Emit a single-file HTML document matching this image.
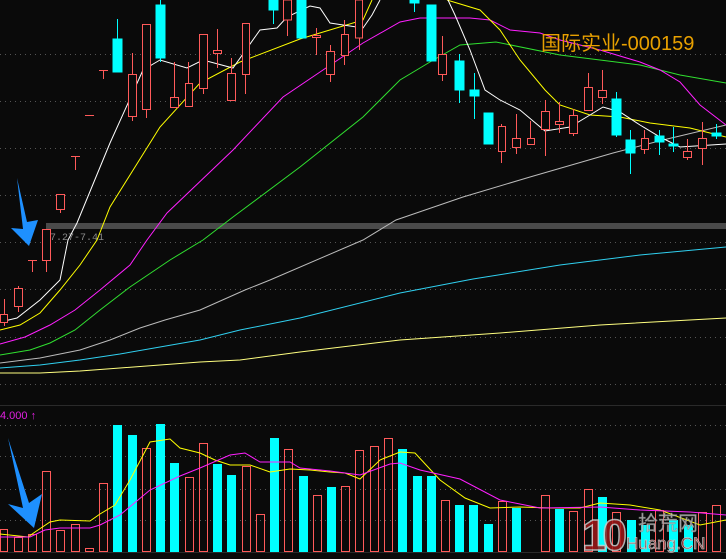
<!DOCTYPE html>
<html><head><meta charset="utf-8"><style>
html,body{margin:0;padding:0;background:#0a0a0a;width:726px;height:559px;overflow:hidden}
svg{display:block}
</style></head><body>
<svg width="726" height="559" viewBox="0 0 726 559" xmlns="http://www.w3.org/2000/svg">
<rect width="726" height="559" fill="#0a0a0a"/>
<g stroke="#555" stroke-dasharray="1,4" stroke-width="1">
<line x1="0" y1="54.5" x2="726" y2="54.5"/><line x1="0" y1="101.5" x2="726" y2="101.5"/>
<line x1="0" y1="148.5" x2="726" y2="148.5"/><line x1="0" y1="195.5" x2="726" y2="195.5"/>
<line x1="0" y1="242.5" x2="726" y2="242.5"/><line x1="0" y1="289.5" x2="726" y2="289.5"/>
<line x1="0" y1="337.5" x2="726" y2="337.5"/><line x1="0" y1="384.5" x2="726" y2="384.5"/>
<line x1="0" y1="425.5" x2="726" y2="425.5"/><line x1="0" y1="456.5" x2="726" y2="456.5"/>
<line x1="0" y1="489.5" x2="726" y2="489.5"/><line x1="0" y1="520.5" x2="726" y2="520.5"/>
</g>
<rect x="46" y="223" width="680" height="6" fill="#4a4a4a"/>
<text x="50" y="240" font-family="Liberation Mono,monospace" font-size="10" fill="#888">7.27-7.41</text>
<line x1="0" y1="405.5" x2="726" y2="405.5" stroke="#2a2a2a"/>
<line x1="0" y1="552.5" x2="726" y2="552.5" stroke="#2a2a2a"/>
<text x="0" y="419" font-family="Liberation Sans,sans-serif" font-size="11" fill="#e020e0">4.000 ↑</text>

<g fill="none" stroke-width="1">
<polyline stroke="#ffff80" points="0,373 40,373 80,371 120,368 160,365 200,362 240,360 300,352 400,340 500,333 600,325 726,318"/>
<polyline stroke="#30d0f0" points="0,368 40,365 80,360 120,354 160,347 200,340 240,330 300,318 400,293 473,279 560,265 640,255 726,247"/>
<polyline stroke="#bbb" points="0,363 40,358 80,350 110,340 140,328 165,320 200,310 245,290 270,280 363,240 396,220 463,197 530,177 613,153 663,140 726,125"/>
<polyline stroke="#30e030" points="0,355 30,350 50,343 75,330 100,310 130,287 170,260 203,240 233,217 300,167 363,117 400,80 430,62 460,45 496,42 560,55 600,60 640,65 680,75 726,83"/>
<polyline stroke="#ff20ff" points="0,344 25,337 50,325 75,310 100,290 130,265 147,240 167,213 233,150 283,97 363,43 400,22 420,18 470,18 490,20 510,30 540,33 560,40 600,50 640,62 660,70 680,82 700,105 726,125"/>
<polyline stroke="#ffff00" points="0,330 20,325 40,313 60,290 80,265 97,240 110,207 160,127 200,83 240,62 300,39 363,20 372,0"/>
<polyline stroke="#ffff00" points="447,0 480,10 500,30 520,60 545,90 560,105 590,115 620,117 650,123 690,128 726,137"/>
<polyline stroke="#fff" points="0,322 17,318 40,300 60,280 68,240 77,223 110,143 143,70 160,60 187,68 203,60 233,68 260,30 277,28 287,17 310,6 320,8 330,23 363,28 372,15 380,0"/>
<polyline stroke="#fff" points="448,0 455,15 470,50 485,90 500,100 520,110 545,131 570,127 590,115 603,107 620,112 640,125 660,137 680,147 726,144"/>
</g>

<g stroke="#ff5a5a" fill="#0a0a0a" stroke-width="1">
<line x1="4.5" y1="299" x2="4.5" y2="326"/><rect x="0.5" y="314.5" width="7" height="8"/>
<line x1="18.5" y1="286" x2="18.5" y2="312"/><rect x="14.5" y="288.5" width="8" height="18"/>
<line x1="28" y1="260.5" x2="37" y2="260.5"/><line x1="32.5" y1="260" x2="32.5" y2="272"/>
<line x1="46.5" y1="229" x2="46.5" y2="272"/><rect x="42.5" y="229.5" width="8" height="31"/>
<line x1="60.5" y1="194" x2="60.5" y2="213"/><rect x="56.5" y="194.5" width="8" height="15"/>
<line x1="71" y1="156.5" x2="80" y2="156.5"/><line x1="75.5" y1="156" x2="75.5" y2="170"/>
<line x1="85" y1="115.5" x2="94" y2="115.5"/>
<line x1="99" y1="70.5" x2="108" y2="70.5"/><line x1="103.5" y1="70" x2="103.5" y2="79"/>
<line x1="132.5" y1="53" x2="132.5" y2="121"/><rect x="128.5" y="74.5" width="8" height="42"/>
<line x1="146.5" y1="24" x2="146.5" y2="118"/><rect x="142.5" y="24.5" width="8" height="85"/>
<line x1="174.5" y1="62" x2="174.5" y2="107"/><rect x="170.5" y="97.5" width="8" height="10"/>
<line x1="188.5" y1="62" x2="188.5" y2="106"/><rect x="185.5" y="83.5" width="7" height="23"/>
<line x1="203.5" y1="34" x2="203.5" y2="94"/><rect x="199.5" y="34.5" width="8" height="54"/>
<line x1="217.5" y1="29" x2="217.5" y2="68"/><rect x="213.5" y="50.5" width="8" height="3"/>
<line x1="231.5" y1="58" x2="231.5" y2="101"/><rect x="227.5" y="73.5" width="8" height="27"/>
<line x1="245.5" y1="23" x2="245.5" y2="94"/><rect x="242.5" y="23.5" width="7" height="51"/>
<line x1="287.5" y1="0" x2="287.5" y2="36"/><rect x="283.5" y="0" width="8" height="20"/>
<line x1="316.5" y1="28" x2="316.5" y2="55"/><rect x="312.5" y="35.5" width="8" height="2"/>
<line x1="330.5" y1="45" x2="330.5" y2="82"/><rect x="326.5" y="51.5" width="8" height="23"/>
<line x1="344.5" y1="20" x2="344.5" y2="65"/><rect x="341.5" y="34.5" width="7" height="21"/>
<line x1="359.5" y1="0" x2="359.5" y2="50"/><rect x="355.5" y="0" width="7" height="38"/>
<line x1="442.5" y1="36" x2="442.5" y2="81"/><rect x="438.5" y="54.5" width="8" height="20"/>
<line x1="501.5" y1="124" x2="501.5" y2="163"/><rect x="498.5" y="126.5" width="7" height="25"/>
<line x1="516.5" y1="114" x2="516.5" y2="154"/><rect x="512.5" y="138.5" width="8" height="9"/>
<line x1="530.5" y1="121" x2="530.5" y2="145"/><rect x="527.5" y="138.5" width="7" height="6"/>
<line x1="545.5" y1="100" x2="545.5" y2="156"/><rect x="541.5" y="111.5" width="8" height="18"/>
<line x1="559.5" y1="102" x2="559.5" y2="133"/><rect x="555.5" y="121.5" width="8" height="3"/>
<line x1="573.5" y1="109" x2="573.5" y2="136"/><rect x="569.5" y="115.5" width="8" height="18"/>
<line x1="588.5" y1="73" x2="588.5" y2="110"/><rect x="584.5" y="87.5" width="8" height="23"/>
<line x1="602.5" y1="70" x2="602.5" y2="104"/><rect x="598.5" y="90.5" width="8" height="7"/>
<line x1="644.5" y1="130" x2="644.5" y2="154"/><rect x="641.5" y="138.5" width="7" height="11"/>
<line x1="687.5" y1="139" x2="687.5" y2="160"/><rect x="683.5" y="151.5" width="8" height="6"/>
<line x1="702.5" y1="122" x2="702.5" y2="165"/><rect x="698.5" y="138.5" width="8" height="10"/>
</g>
<g fill="#00ffff" stroke="#00ffff">
<line x1="117.5" y1="19" x2="117.5" y2="72"/><rect x="113" y="39" width="9" height="33"/>
<line x1="160.5" y1="0" x2="160.5" y2="62"/><rect x="156" y="5" width="9" height="53"/>
<line x1="273.5" y1="0" x2="273.5" y2="24"/><rect x="269" y="0" width="9" height="10"/>
<line x1="301.5" y1="0" x2="301.5" y2="38"/><rect x="297" y="0" width="9" height="38"/>
<line x1="414.5" y1="0" x2="414.5" y2="12"/><rect x="410" y="0" width="9" height="3"/>
<rect x="427" y="5" width="9" height="56"/>
<line x1="459.5" y1="54" x2="459.5" y2="103"/><rect x="455" y="61" width="9" height="29"/>
<line x1="474.5" y1="73" x2="474.5" y2="119"/><rect x="470" y="90" width="9" height="6"/>
<rect x="484" y="113" width="9" height="31"/>
<line x1="616.5" y1="92" x2="616.5" y2="137"/><rect x="612" y="99" width="9" height="36"/>
<line x1="630.5" y1="130" x2="630.5" y2="174"/><rect x="626" y="140" width="9" height="13"/>
<line x1="659.5" y1="130" x2="659.5" y2="155"/><rect x="655" y="136" width="9" height="6"/>
<line x1="673.5" y1="127" x2="673.5" y2="152"/><rect x="669" y="144" width="9" height="2"/>
<line x1="716.5" y1="124" x2="716.5" y2="139"/><rect x="712" y="133" width="9" height="3"/>
</g>
<text x="541" y="50" font-family="Liberation Sans,'Noto Sans CJK SC',sans-serif" font-size="20" fill="#e8a000">国际实业-000159</text>

<g stroke="#ff5a5a" fill="none">
<rect x="0.5" y="529.5" width="7" height="22"/><rect x="14.5" y="537.5" width="8" height="14"/>
<rect x="28.5" y="534.5" width="8" height="17"/><rect x="42.5" y="471.5" width="8" height="80"/>
<rect x="56.5" y="530.5" width="8" height="21"/><rect x="71.5" y="524.5" width="8" height="27"/>
<rect x="85.5" y="548.5" width="8" height="3"/><rect x="99.5" y="483.5" width="8" height="68"/>
<rect x="142.5" y="448.5" width="8" height="103"/><rect x="185.5" y="477.5" width="8" height="74"/>
<rect x="199.5" y="443.5" width="8" height="108"/><rect x="242.5" y="466.5" width="8" height="85"/>
<rect x="256.5" y="514.5" width="8" height="37"/><rect x="284.5" y="449.5" width="8" height="102"/>
<rect x="313.5" y="495.5" width="8" height="56"/><rect x="341.5" y="486.5" width="8" height="65"/>
<rect x="355.5" y="450.5" width="8" height="101"/><rect x="370.5" y="446.5" width="8" height="105"/>
<rect x="384.5" y="438.5" width="8" height="113"/><rect x="441.5" y="500.5" width="8" height="51"/>
<rect x="498.5" y="501.5" width="8" height="50"/><rect x="541.5" y="495.5" width="8" height="56"/>
<rect x="569.5" y="511.5" width="8" height="40"/><rect x="584.5" y="489.5" width="8" height="62"/>
<rect x="612.5" y="512.5" width="8" height="39"/><rect x="655.5" y="510.5" width="8" height="41"/>
<rect x="698.5" y="512.5" width="8" height="39"/><rect x="712.5" y="505.5" width="8" height="46"/>
</g>
<g fill="#00ffff">
<rect x="113" y="425" width="9" height="127"/><rect x="128" y="435" width="9" height="117"/>
<rect x="156" y="424" width="9" height="128"/><rect x="170" y="463" width="9" height="89"/>
<rect x="213" y="464" width="9" height="88"/><rect x="227" y="475" width="9" height="77"/>
<rect x="270" y="438" width="9" height="114"/><rect x="299" y="476" width="9" height="76"/>
<rect x="327" y="487" width="9" height="65"/><rect x="398" y="449" width="9" height="103"/>
<rect x="413" y="476" width="9" height="76"/><rect x="427" y="476" width="9" height="76"/>
<rect x="455" y="505" width="9" height="47"/><rect x="469" y="505" width="9" height="47"/>
<rect x="484" y="524" width="9" height="28"/><rect x="512" y="508" width="9" height="44"/>
<rect x="555" y="509" width="9" height="43"/><rect x="598" y="497" width="9" height="55"/>
<rect x="627" y="520" width="9" height="32"/><rect x="641" y="525" width="9" height="27"/>
<rect x="669" y="520" width="9" height="32"/><rect x="684" y="525" width="9" height="27"/>
</g>
<g fill="none">
<polyline stroke="#ffff00" points="0,534 28,537 35,532 50,522 60,520 90,521 100,514 115,505 130,480 150,442 170,439 180,448 200,453 215,460 230,465 250,465 270,472 290,469 310,470 330,472 345,473 360,479 380,460 400,452 415,453 440,480 465,498 490,508 520,507 550,508 580,508 600,503 630,505 660,510 700,525 726,520"/>
<polyline stroke="#ff20ff" points="0,537 30,537 45,530 60,528 90,528 100,525 120,515 150,490 180,476 200,468 230,455 245,453 260,462 290,462 300,468 330,471 360,475 390,464 400,463 420,470 460,479 500,500 540,508 600,507 640,510 690,512 726,515"/>
</g>

<polygon fill="#1e90ff" points="17,178 27,222 38,220 29,246 11,228 23,229"/>
<polygon fill="#1e90ff" points="8,438 29,503 42,494 34,528 8,504 23,508"/>

<g opacity="0.85">
<text x="582" y="550" font-family="Liberation Sans,sans-serif" font-weight="bold" font-size="44" fill="#a01818" stroke="#ccc" stroke-width="1.5" letter-spacing="-4">10</text>
<text x="638" y="530" font-family="'Noto Sans CJK SC',sans-serif" font-size="20" fill="#bbb" stroke="#888" stroke-width="0.5">拾荒网</text>
<text x="626" y="549" font-family="Liberation Sans,sans-serif" font-size="17" fill="#a01818" stroke="#ccc" stroke-width="0.8">Huang.CN</text>
</g>
</svg>
</body></html>
